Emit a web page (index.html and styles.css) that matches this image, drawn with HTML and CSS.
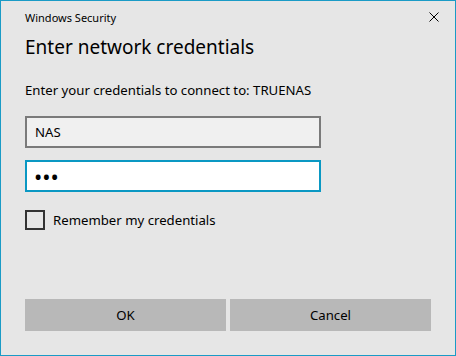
FILE: index.html
```html
<!DOCTYPE html>
<html lang="en">
<head>
    <meta charset="UTF-8">
    <title>Windows Security</title>
    <link rel="stylesheet" href="styles.css">
</head>
<body>
    <div class="dialog">
        <div class="titlebar">
            <span class="title">Windows Security</span>
            <svg class="close" width="10" height="10" viewBox="0 0 10 10">
                <path d="M0.5 0.5 L9.5 9.5 M9.5 0.5 L0.5 9.5" stroke="#000" stroke-width="1" fill="none"/>
            </svg>
        </div>
        <h1>Enter network credentials</h1>
        <p class="desc">Enter your credentials to connect to: TRUENAS</p>
        <input type="text" class="field user" value="NAS">
        <input type="password" class="field pass" value="abc">
        <label class="remember">
            <span class="box"></span>
            Remember my credentials
        </label>
        <div class="buttons">
            <button class="btn">OK</button>
            <button class="btn">Cancel</button>
        </div>
    </div>
</body>
</html>
```
FILE: styles.css
```css
*{
    margin: 0;
    padding: 0;
    box-sizing: border-box;
}
body{
    font-family: "Noto Sans", "Open Sans", sans-serif;
    color: #000;
}
.dialog{
    width: 456px;
    height: 356px;
    border: 1px solid #1a9bc6;
    background-color: #e6e6e6;
    padding: 0 24px 24px 24px;
    display: flex;
    flex-direction: column;
}

.titlebar{
    height: 32px;
    display: flex;
    align-items: center;
    justify-content: space-between;
    margin-right: -8px;
}
.title{
    font-size: 11px;
}

h1{
    font-size: 19px;
    font-weight: normal;
    line-height: 28px;
}

.desc{
    font-size: 13.2px;
    line-height: 20px;
    margin-top: 19px;
}

.field{
    display: block;
    width: 296px;
    height: 32px;
    border: 2px solid #7a7a7a;
    background-color: #f0f0f0;
    padding-left: 8px;
    font-family: inherit;
    font-size: 13.2px;
    color: #000;
    outline: none;
}
.user{
    margin-top: 16px;
}
.pass{
    margin-top: 12px;
    border-color: #0a98c3;
    background-color: #fff;
    font-size: 22px;
    padding-left: 7px;
    letter-spacing: 0;
}

.remember{
    margin-top: 18px;
    display: flex;
    align-items: center;
    gap: 8px;
    font-size: 13.2px;
}
.box{
    width: 20px;
    height: 20px;
    border: 2px solid #333;
}

.buttons{
    margin-top: auto;
    display: flex;
    gap: 4px;
}
.btn{
    flex: 1;
    height: 32px;
    border: none;
    background-color: #b8b8b8;
    font-family: inherit;
    font-size: 13.2px;
    color: #000;
}
```
